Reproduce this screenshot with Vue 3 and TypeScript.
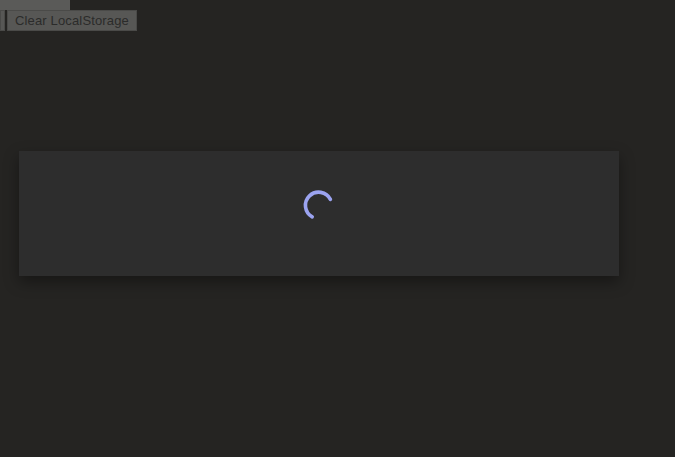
<script setup lang="ts">
const label: string = 'Clear LocalStorage'
</script>

<template>
  <div class="page">
    <div class="topbar"></div>
    <div class="tools">
      <button class="stub" type="button" aria-hidden="true"></button>
      <button class="clear" type="button">{{ label }}</button>
    </div>
    <section class="card">
      <svg class="spinner" width="32" height="32" viewBox="0 0 32 32" fill="none" role="img" aria-label="Loading">
        <path d="M28.4 10.4 A13.2 13.2 0 1 0 10.2 27.9" stroke="#9ba3f0" stroke-width="3.6" stroke-linecap="round" />
      </svg>
    </section>
  </div>
</template>

<style>
html, body {
  margin: 0;
  background: #252422;
}
</style>

<style scoped>
.page {
  width: 675px;
  height: 457px;
  overflow: hidden;
  background: #252422;
  font-family: "Liberation Sans", Arial, sans-serif;
}
.topbar {
  width: 70px;
  height: 10px;
  background: #5a5a58;
}
.tools {
  display: flex;
  gap: 2px;
  height: 21px;
}
.stub, .clear {
  box-sizing: border-box;
  height: 21px;
  margin: 0;
  background: #575755;
  border: 1px solid #4a4a48;
  border-radius: 0;
}
.stub {
  width: 5px;
  padding: 0;
}
.clear {
  width: 130px;
  padding: 0;
  color: #2b2b2a;
  font: 13px "Liberation Sans", Arial, sans-serif;
  letter-spacing: 0.15px;
}
.card {
  width: 600px;
  height: 125px;
  margin: 120px 0 0 19px;
  padding: 38px 2px 0 0;
  box-sizing: border-box;
  display: flex;
  justify-content: center;
  align-items: flex-start;
  background: #2d2d2d;
  box-shadow: 0 6px 14px rgba(0, 0, 0, 0.38);
}
.spinner {
  display: block;
}
</style>
